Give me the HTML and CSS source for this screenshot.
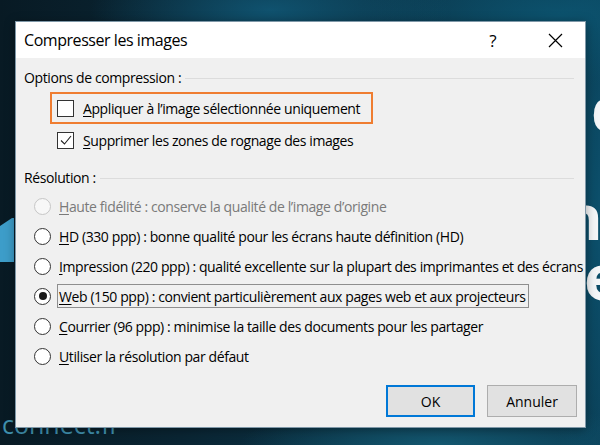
FILE: index.html
```html
<!DOCTYPE html>
<html lang="fr">
<head>
<meta charset="utf-8">
<title>Compresser les images</title>
<link rel="stylesheet" href="styles.css">
</head>
<body>
<div class="desktop">
  <svg class="bg-shape" width="16" height="48" viewBox="0 0 16 48"><polygon points="0,8 12,0 14,0 14,44 0,44" fill="#3d9dc9"/></svg>
  <span class="bg-letter bl-c">c</span>
  <span class="bg-letter bl-n">n</span>
  <span class="bg-letter bl-e">e</span>
  <span class="bg-brand">connect.fr</span>

  <section class="dialog">
    <header class="titlebar">
      <h1 class="title">Compresser les images</h1>
      <span class="tb-help">?</span>
      <span class="tb-close"><svg width="15" height="15" viewBox="0 0 15 15"><path d="M1 1 L14 14 M14 1 L1 14" stroke="#000" stroke-width="1.2" fill="none"/></svg></span>
    </header>
    <div class="content">
      <div class="group-label"><span>Options de compression :</span><i class="rule"></i></div>
      <label class="check highlight"><span class="box"></span><span><u>A</u>ppliquer à l’image sélectionnée uniquement</span></label>
      <label class="check plain"><span class="box"><svg width="14" height="14" viewBox="0 0 14 14"><path d="M2 7.5 L5.5 11 L12 3" stroke="#222" stroke-width="1.1" fill="none"/></svg></span><span><u>S</u>upprimer les zones de rognage des images</span></label>

      <div class="group-label gap-res"><span>Résolution :</span><i class="rule"></i></div>
      <ul class="radios">
        <li class="radio disabled"><span class="dot"></span><span class="lbl"><u>H</u>aute fidélité : conserve la qualité de l’image d’origine</span></li>
        <li class="radio"><span class="dot"></span><span class="lbl"><u>H</u>D (330 ppp) : bonne qualité pour les écrans haute définition (HD)</span></li>
        <li class="radio"><span class="dot"></span><span class="lbl"><u>I</u>mpression (220 ppp) : qualité excellente sur la plupart des imprimantes et des écrans</span></li>
        <li class="radio selected"><span class="dot"></span><span class="lbl focus"><u>W</u>eb (150 ppp) : convient particulièrement aux pages web et aux projecteurs</span></li>
        <li class="radio"><span class="dot"></span><span class="lbl"><u>C</u>ourrier (96 ppp) : minimise la taille des documents pour les partager</span></li>
        <li class="radio"><span class="dot"></span><span class="lbl"><u>U</u>tiliser la résolution par défaut</span></li>
      </ul>

      <div class="buttons">
        <button class="btn btn-default">OK</button>
        <button class="btn">Annuler</button>
      </div>
    </div>
  </section>
</div>
</body>
</html>
```

FILE: styles.css
```css
* { box-sizing: border-box; }
html, body { margin: 0; padding: 0; }
body {
  width: 600px;
  height: 445px;
  overflow: hidden;
  font-family: "Open Sans", "Noto Sans", sans-serif;
}
.desktop {
  position: relative;
  width: 600px;
  height: 445px;
  overflow: hidden;
  background:
    radial-gradient(ellipse 180px 60px at 270px 10px, rgba(16, 86, 116, 0.9), rgba(16, 86, 116, 0) 100%),
    radial-gradient(ellipse 200px 70px at 560px 15px, rgba(12, 84, 112, 0.9), rgba(12, 84, 112, 0) 100%),
    radial-gradient(ellipse 200px 50px at 440px 445px, rgba(20, 90, 115, 0.9), rgba(20, 90, 115, 0) 100%),
    radial-gradient(ellipse 60px 300px at 600px 220px, rgba(12, 80, 108, 1), rgba(12, 80, 108, 0) 100%),
    linear-gradient(90deg, #081a24 0%, #0a2533 30%, #0b3447 60%, #0b3e55 100%);
}
.bg-shape {
  position: absolute;
  left: 0;
  top: 218px;
}
.bg-letter {
  position: absolute;
  color: #f4f6f8;
  font-family: "Open Sans", sans-serif;
  font-weight: 700;
  font-size: 62px;
  line-height: 0.75;
}
.bl-c { left: 591px; top: 85px; }
.bl-n { left: 562px; top: 193px; }
.bl-e { left: 584px; top: 253px; }
.bg-brand {
  position: absolute;
  left: 2px;
  top: 412px;
  color: #4aa6c8;
  font-family: "Open Sans", sans-serif;
  font-size: 25px;
  line-height: 1;
  opacity: 0.85;
}

.dialog {
  position: absolute;
  left: 15px;
  top: 21px;
  width: 571px;
  height: 407px;
  border: 1px solid #7f98a8;
  background: #f0f0f0;
  box-shadow: 0 2px 10px rgba(0, 0, 0, 0.35);
  display: flex;
  flex-direction: column;
}
.titlebar {
  height: 36px;
  background: #ffffff;
  display: flex;
  align-items: center;
  padding-left: 8px;
}
.title {
  margin: 0;
  font-weight: 400;
  font-size: 16px;
  letter-spacing: -0.45px;
  color: #000;
  flex: 1;
}
.tb-help {
  font-size: 17px;
  width: 20px;
  text-align: center;
  margin-right: 45px;
}
.tb-close {
  width: 15px;
  height: 15px;
  margin-right: 22px;
  display: flex;
}

.content {
  flex: 1;
  padding: 9px 8px 0 8px;
  font-size: 14px;
  letter-spacing: -0.4px;
  color: #000;
  display: flex;
  flex-direction: column;
}
.group-label {
  height: 20px;
  display: flex;
  align-items: center;
  gap: 4px;
  padding-right: 3px;
}
.rule {
  flex: 1;
  height: 1px;
  background: #dcdcdc;
  margin-top: 2px;
}
.gap-res { margin-top: 11px; }

.check {
  display: flex;
  align-items: center;
  gap: 9px;
  height: 32px;
  white-space: nowrap;
}
.highlight {
  margin-top: 5px;
  margin-left: 26px;
  align-self: flex-start;
  border: 2px solid #ef7d31;
  padding: 0 11px 0 5px;
}
.plain { margin-left: 33px; }
.box {
  width: 17px;
  height: 17px;
  border: 1px solid #333;
  background: #fff;
  display: flex;
  align-items: center;
  justify-content: center;
  flex: none;
}
u { text-decoration: underline; text-underline-offset: 2px; text-decoration-thickness: 1px; }

.radios {
  list-style: none;
  margin: 4px 0 0 0;
  padding: 0 0 0 10px;
}
.radio {
  height: 30px;
  display: flex;
  align-items: center;
  gap: 8px;
}
.dot {
  width: 17px;
  height: 17px;
  border-radius: 50%;
  border: 1px solid #333;
  background: #fff;
  flex: none;
  display: flex;
  align-items: center;
  justify-content: center;
}
.selected .dot::after {
  content: "";
  width: 8px;
  height: 8px;
  border-radius: 50%;
  background: #1a1a1a;
}
.disabled .dot { border-color: #c6c6c6; background: #f7f7f7; }
.disabled .lbl { color: #7a7a7a; }
.lbl { white-space: nowrap; }
.focus {
  border: 1px solid #8e8e8e;
  height: 24px;
  display: flex;
  align-items: center;
  padding: 0 2px 0 1px;
  margin-left: -2px;
}

.buttons {
  margin-top: 14px;
  display: flex;
  justify-content: flex-end;
  gap: 12px;
}
.btn {
  width: 89px;
  height: 32px;
  background: #e1e1e1;
  border: 1px solid #adadad;
  font-family: inherit;
  font-size: 14px;
  color: #000;
  padding: 0;
}
.btn + .btn { width: 90px; }
.btn-default { border: 2px solid #0078d7; }
```
